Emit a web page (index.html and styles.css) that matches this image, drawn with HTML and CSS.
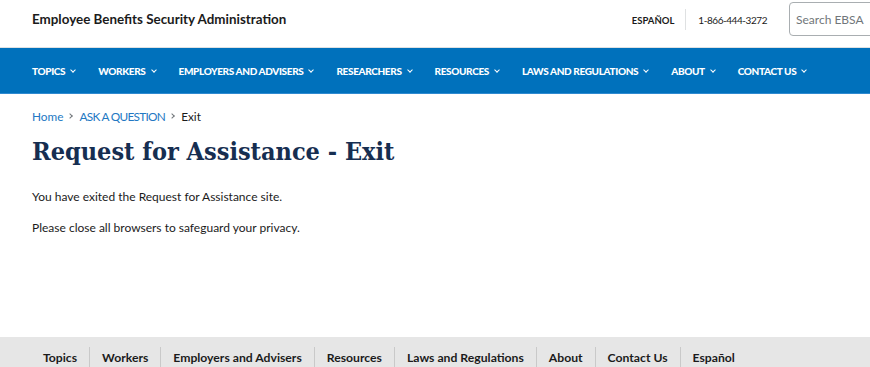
FILE: index.html
```html
<!DOCTYPE html>
<html lang="en">
<head>
  <meta charset="UTF-8" />
  <meta name="viewport" content="width=device-width, initial-scale=1.0" />
  <title>Request for Assistance - Exit | EBSA</title>
  <link rel="stylesheet" href="styles.css">
</head>
<body>
  <header class="site-header">
    <div class="agency-name">Employee Benefits Security Administration</div>
    <div class="utility">
      <a class="utility-link" href="#">ESPAÑOL</a>
      <span class="utility-sep"></span>
      <span class="utility-phone">1-866-444-3272</span>
      <input class="search-box" type="text" placeholder="Search EBSA">
    </div>
  </header>

  <nav class="main-nav">
    <a href="#" class="nav-item">TOPICS <span class="caret"></span></a>
    <a href="#" class="nav-item">WORKERS <span class="caret"></span></a>
    <a href="#" class="nav-item">EMPLOYERS AND ADVISERS <span class="caret"></span></a>
    <a href="#" class="nav-item">RESEARCHERS <span class="caret"></span></a>
    <a href="#" class="nav-item">RESOURCES <span class="caret"></span></a>
    <a href="#" class="nav-item">LAWS AND REGULATIONS <span class="caret"></span></a>
    <a href="#" class="nav-item">ABOUT <span class="caret"></span></a>
    <a href="#" class="nav-item">CONTACT US <span class="caret"></span></a>
  </nav>

  <main class="content">
    <div class="breadcrumb">
      <a href="#">Home</a>
      <span class="crumb-sep"></span>
      <a href="#" class="caps">ASK A QUESTION</a>
      <span class="crumb-sep"></span>
      <span class="crumb-current">Exit</span>
    </div>
    <h1>Request for Assistance - Exit</h1>
    <p>You have exited the Request for Assistance site.</p>
    <p>Please close all browsers to safeguard your privacy.</p>
  </main>

  <footer class="footer-nav">
    <a href="#">Topics</a>
    <a href="#">Workers</a>
    <a href="#">Employers and Advisers</a>
    <a href="#">Resources</a>
    <a href="#">Laws and Regulations</a>
    <a href="#">About</a>
    <a href="#">Contact Us</a>
    <a href="#">Español</a>
  </footer>
</body>
</html>
```

FILE: styles.css
```css
:root {
  --blue: #0071bc;
  --navy: #162e51;
  --link: #2378c3;
  --ink: #1b1b1b;
  --font-text: 'Lato', 'Open Sans', sans-serif;
  --font-title: 'DejaVu Serif Condensed', 'DejaVu Serif', serif;
}

html, body {
  margin: 0;
  padding: 0;
  overflow: hidden;
  font-family: var(--font-text);
  color: var(--ink);
  background: #fff;
}

a {
  text-decoration: none;
  color: inherit;
}

.site-header {
  height: 48px;
  display: flex;
  align-items: center;
  justify-content: space-between;
  padding-left: 32px;
  border-bottom: 1px solid #dfe1e2;
  box-sizing: border-box;
}

.agency-name {
  font-size: 13.4px;
  font-weight: 700;
  margin-top: -10px;
}

.utility {
  display: flex;
  align-items: center;
  align-self: flex-start;
  height: 36px;
  margin-top: 1px;
}

.utility-link {
  font-size: 9.5px;
  font-weight: 700;
  margin-top: 2px;
}

.utility-sep {
  width: 1px;
  height: 21px;
  background: #dfe1e2;
  margin: 0 12px 0 11px;
}

.utility-phone {
  font-size: 10px;
  letter-spacing: -0.45px;
  margin-top: 2px;
}

.search-box {
  margin-left: 22px;
  width: 100px;
  height: 34px;
  box-sizing: border-box;
  border: 1px solid #a9aeb1;
  border-radius: 4px;
  padding: 0 6px;
  font-family: var(--font-text);
  font-size: 12px;
  margin-right: -19px;
}

.search-box::placeholder {
  color: #71767a;
}

.main-nav {
  height: 46px;
  background: var(--blue);
  border-bottom: 1px solid #2f8ad0;
  box-sizing: border-box;
  display: flex;
  align-items: center;
  padding-left: 32px;
  gap: 23px;
}

.nav-item {
  color: #fff;
  font-size: 10px;
  font-weight: 900;
  letter-spacing: -0.35px;
  display: flex;
  align-items: center;
  white-space: nowrap;
}

.caret {
  width: 3px;
  height: 3px;
  border-right: 1px solid #fff;
  border-bottom: 1px solid #fff;
  transform: rotate(45deg);
  margin: -2px 0 0 6px;
}

.content {
  padding: 14px 32px 0;
  height: 243px;
  box-sizing: border-box;
}

.breadcrumb {
  display: flex;
  align-items: center;
  font-size: 11.8px;
  height: 16px;
}

.breadcrumb a {
  color: var(--link);
}

.breadcrumb .caps {
  letter-spacing: -0.7px;
}

.crumb-sep {
  width: 3px;
  height: 3px;
  border-right: 1px solid #71767a;
  border-top: 1px solid #71767a;
  transform: rotate(45deg);
  margin: 0 7px 0 5px;
}

.crumb-current {
  color: var(--ink);
}

h1 {
  font-family: var(--font-title);
  font-stretch: condensed;
  font-size: 25px;
  font-weight: 700;
  color: var(--navy);
  margin: 12px 0 21px;
  line-height: 32px;
}

p {
  font-size: 12px;
  margin: 0 0 15px;
  line-height: 16px;
}

.footer-nav {
  background: #e6e6e6;
  height: 40px;
  display: flex;
  align-items: flex-start;
  padding: 10px 0 0 31px;
  box-sizing: border-box;
}

.footer-nav a {
  font-size: 12.2px;
  font-weight: 700;
  padding: 2px 12px 8px;
  line-height: 17px;
  border-left: 1px solid #c9c9c9;
}

.footer-nav a:first-child {
  border-left: none;
}
```
